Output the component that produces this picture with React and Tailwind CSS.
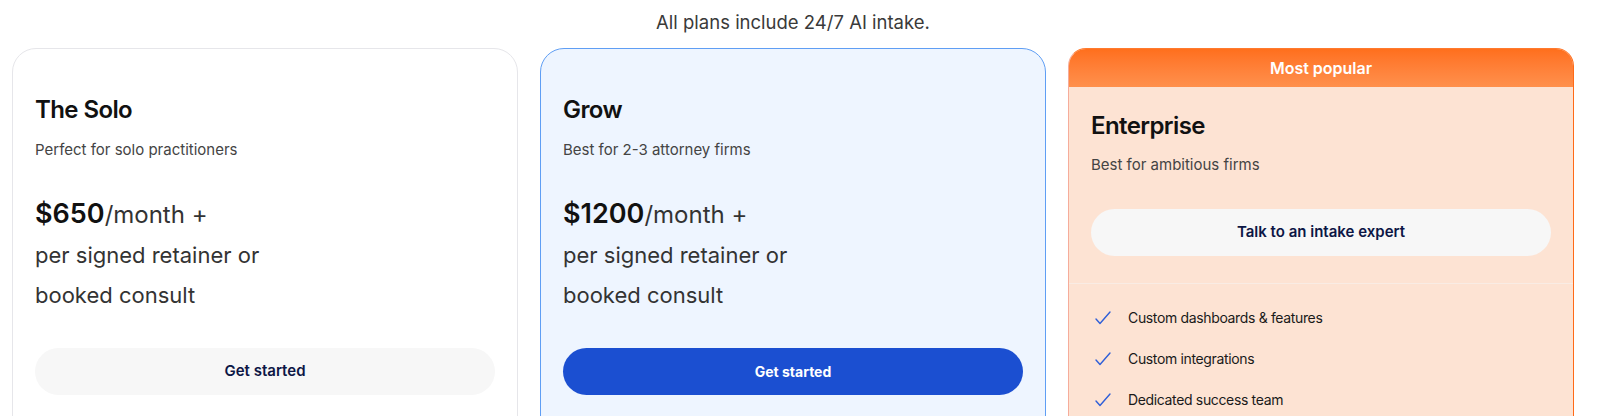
import React from "react";

const CheckMark = () => (
  <svg width="16" height="14" viewBox="0 0 16 14" fill="none" className="shrink-0">
    <path d="M1 8 L5 12.5 L15 1" stroke="#2f5fd8" strokeWidth="1.4" strokeLinecap="round" strokeLinejoin="round" />
  </svg>
);

const PriceBlock = ({ amount }) => (
  <div className="mt-[34px] text-[22px] leading-10 text-[#333]">
    <div>
      <span className="text-[27px] font-semibold text-[#111]">{amount}</span>
      <span className="text-2xl">/month +</span>
    </div>
    <div>per signed retainer or</div>
    <div>booked consult</div>
  </div>
);

const App = () => {
  const features = [
    "Custom dashboards & features",
    "Custom integrations",
    "Dedicated success team",
  ];

  return (
    <div className="h-[416px] overflow-hidden bg-white font-['Inter',sans-serif]">
      <div className="ml-[12px] w-[1562px]">
        <p className="pt-2 text-center text-[18.5px] leading-7 text-[#3a3a3a]">
          All plans include 24/7 AI intake.
        </p>

        <div className="mt-3 grid grid-cols-3 gap-[22px]">
          {/* Solo */}
          <div className="h-[420px] rounded-3xl border border-[#e6e6ea] bg-white px-[22px] pt-[45px]">
            <h3 className="text-2xl leading-8 font-semibold tracking-tight text-[#111]">The Solo</h3>
            <p className="mt-3.5 text-[15px] leading-5 text-[#444]">Perfect for solo practitioners</p>
            <PriceBlock amount="$650" />
            <button className="mt-[33px] h-[47px] w-full rounded-full bg-[#f7f7f7] text-[15px] font-semibold text-[#0c1645]">
              Get started
            </button>
          </div>

          {/* Grow */}
          <div className="h-[420px] rounded-3xl border border-[#5f9ef4] bg-[#eef5ff] px-[22px] pt-[45px]">
            <h3 className="text-2xl leading-8 font-semibold tracking-tight text-[#111]">Grow</h3>
            <p className="mt-3.5 text-[15px] leading-5 text-[#444]">Best for 2-3 attorney firms</p>
            <PriceBlock amount="$1200" />
            <button className="mt-[33px] h-[47px] w-full rounded-full bg-[#1b4fd1] text-sm font-bold text-white">
              Get started
            </button>
          </div>

          {/* Enterprise */}
          <div className="h-[420px] overflow-hidden rounded-[18px] border border-l-[#f6ac9a] border-t-[#ff7a2e] border-r-[#ff6a17] border-b-[#ff6a17] bg-[#fde3d3]">
            <div className="flex h-[38px] items-center justify-center bg-gradient-to-b from-[#ff6f1c] to-[#ff904c] text-base font-semibold text-white">
              Most popular
            </div>
            <div className="px-[22px] pt-[23px]">
              <h3 className="text-2xl leading-8 font-semibold tracking-tight text-[#111]">Enterprise</h3>
              <p className="mt-[13px] text-[15px] leading-5 text-[#444]">Best for ambitious firms</p>
              <button className="mt-[34px] h-[47px] w-full rounded-full bg-[#f7f7f7] text-[15px] font-semibold text-[#0c1645]">
                Talk to an intake expert
              </button>
            </div>
            <div className="mt-[27px] border-t border-[#f9ece4]" />
            <ul className="flex flex-col gap-[21px] pl-[26px] pr-6 pt-6">
              {features.map((f) => (
                <li key={f} className="flex items-center gap-[17px] text-sm leading-5 tracking-tight text-[#1a1a1a]">
                  <CheckMark />
                  {f}
                </li>
              ))}
            </ul>
          </div>
        </div>
      </div>
    </div>
  );
};

export default App;
